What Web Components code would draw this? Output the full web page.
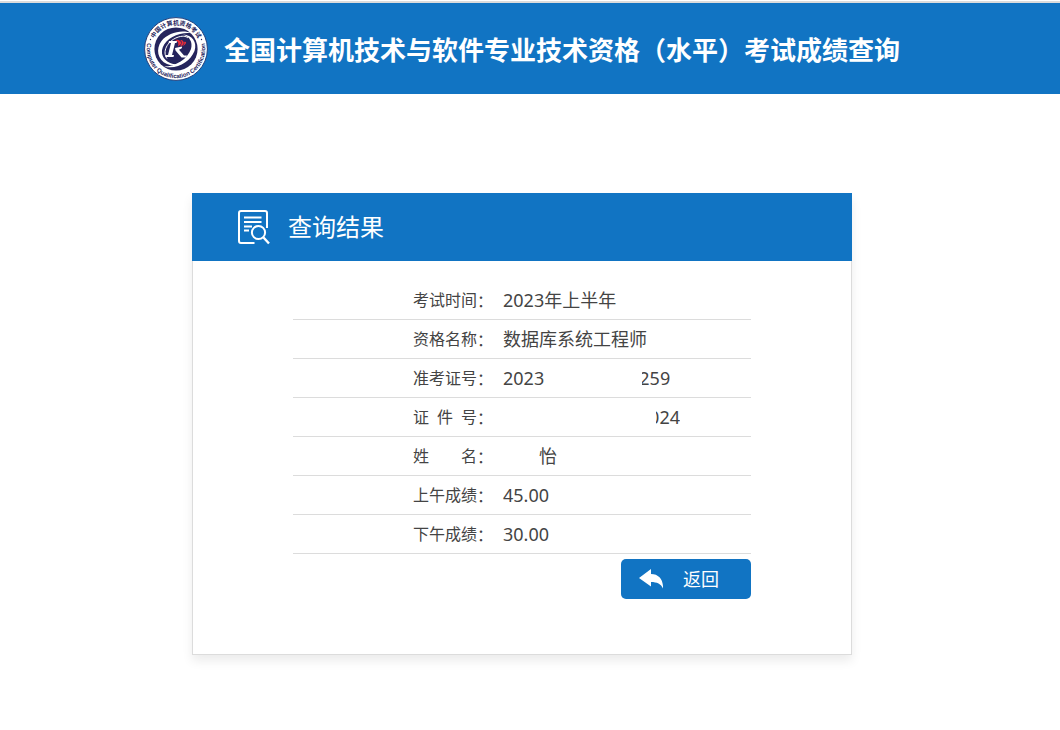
<!DOCTYPE html>
<html lang="zh-CN">
<head>
<meta charset="utf-8">
<title>全国计算机技术与软件专业技术资格（水平）考试成绩查询</title>
<style>
  :root { --brand: #1174c3; --line: #dcdcdc; --text: #444; }
  body {
    margin: 0;
    background: #fff;
    color: var(--text);
    font-family: "Noto Sans", "Noto Sans CJK SC", sans-serif;
  }
</style>
</head>
<body>
<site-header>全国计算机技术与软件专业技术资格（水平）考试成绩查询</site-header>
<result-card>
  <span slot="title">查询结果</span>
  <score-table></score-table>
  <back-button>返回</back-button>
</result-card>

<script>
function define(name, html, setup) {
  const template = document.createElement('template');
  template.innerHTML = html;
  customElements.define(name, class extends HTMLElement {
    constructor() {
      super();
      this.attachShadow({ mode: 'open' }).append(template.content.cloneNode(true));
      if (setup) setup(this.shadowRoot);
    }
  });
}

define('exam-logo', `
  <style>
    :host { display: block; flex: none; width: 64px; height: 64px; }
    svg { display: block; width: 100%; height: 100%; }
    text { fill: #25245c; font-weight: 700; }
  </style>
  <svg viewBox="0 0 64 64" role="img" aria-label="中国计算机资格考试">
    <defs>
      <path id="top" d="M7.800 32A24.200 24.200 0 0 1 56.200 32"/>
      <path id="bottom" d="M4.060 23.500A29.200 29.200 0 1 0 59.940 23.500"/>
    </defs>
    <circle cx="32" cy="32" r="31.400" fill="#fff" stroke="#25407c" stroke-width="1"/>
    <circle cx="32" cy="32" r="21.600" fill="#25245c"/>
    <text font-size="6" text-anchor="middle"><textPath href="#top" startOffset="50%">中国计算机资格考试</textPath></text>
    <text font-size="6" text-anchor="middle" font-family="Liberation Sans"><textPath href="#bottom" startOffset="50%">Computer Qualification Certification</textPath></text>
    <circle cx="6.500" cy="22.500" r=".7" fill="#25245c"/><circle cx="57.500" cy="22.500" r=".7" fill="#25245c"/>
    <path fill="#fff" d="M48 16.500C38 12 24 16 17.500 24C11.500 32 13.500 43 23 47C27 48.800 31 48.500 34 47.500C26 47.500 19 43 18 36.500C17 28 25 19.500 36 17C41 15.800 45 15.800 48 16.500Z"/>
    <path fill="#fff" d="M20 49.500C33 53 46 45 50.500 34C53.500 25 48 18 39 17.500C45.500 19.500 49 25 47 32C43.500 42 32 49.500 20 49.500Z"/>
    <path fill="none" stroke="#fff" stroke-width="1" d="M23 41.500C18 35 23 24.500 33 20.500C38 18.500 42 19 44 21"/>
    <path fill="#fff" d="M25 24H33L32.500 26H31L28 38H30L29.500 40H21.500L22 38H24L27 26H24.500Z"/>
    <path fill="#fff" d="M31 31L38 29.500C38.500 31 37 32 35 32.700L40 38.500H43L42 40.500H37.500L31.500 33.500Z"/>
    <path fill="#e52d3b" d="M31 23C34 22 38 24 37 27L34 29.500C35 26 34 24 31 23ZM36 23C39 23 41 25 39 28L36 29.500C38.500 26 38 24 36 23ZM40 25C42.500 24 43 26 40.500 28L37 30C39 29 41 27 40 25Z"/>
  </svg>`);

define('site-header', `
  <style>
    :host { display: block; margin-top: 1px; border-top: 2px solid var(--line); background: var(--brand); color: #fff; }
    header { display: flex; align-items: center; justify-content: center; gap: 16px; padding: 14px 16px 13px 0; }
    h1 { margin: 0; padding-top: 2px; font-size: 26px; line-height: 40px; font-weight: 700; white-space: nowrap; }
  </style>
  <header><exam-logo></exam-logo><h1><slot></slot></h1></header>`);

define('result-card', `
  <style>
    :host { display: block; padding: 99px 16px 75px 0; }
    section { box-sizing: border-box; max-width: 660px; margin: 0 auto; border: 1px solid var(--line); border-top: 0; box-shadow: 0 6px 10px rgba(0, 0, 0, .08); }
    header { display: flex; align-items: center; gap: 18px; height: 68px; box-sizing: border-box; margin: 0 -1px; padding-left: 46px; background: var(--brand); color: #fff; }
    svg { display: block; width: 32px; height: 36px; }
    h2 { margin: 0; font-size: 24px; line-height: 36px; font-weight: 400; }
    .body { display: flex; flex-direction: column; gap: 5px; padding: 20px 100px 55px; }
  </style>
  <section>
    <header>
      <svg viewBox="0 0 32 36" fill="none" stroke="#fff" stroke-width="2" aria-hidden="true">
        <path d="M16.500 34H3Q1 34 1 32V4Q1 2 3 2H27Q29 2 29 4V19"/>
        <path d="M6 8.500H23.500M6 13H23.500M6 17.500H14M6 21.500H11"/>
        <circle cx="20.500" cy="23.500" r="6.600"/>
        <path d="M25.500 28.500L31 34.500" stroke-width="2.400"/>
      </svg>
      <h2><slot name="title"></slot></h2>
    </header>
    <div class="body"><slot></slot></div>
  </section>`);

const records = [
  ['考试时间', '2023年上半年'],
  ['资格名称', '数据库系统工程师'],
  ['准考证号', '2023', 'ticket', '259'],
  ['证 件 号', '', 'identity', '024'],
  ['姓 名', '', 'person', '怡'],
  ['上午成绩', '45.00'],
  ['下午成绩', '30.00']
];

define('score-table', `
  <style>
    :host { display: block; }
    table { width: 100%; border-collapse: separate; border-spacing: 0; }
    th, td { height: 38px; padding: 0; border-bottom: 1px solid var(--line); text-align: left; font-weight: 400; white-space: nowrap; }
    th { width: 90px; padding-left: 120px; font-size: 16px; }
    td { font-size: 18px; }
    .label, .value { display: flex; align-items: center; line-height: 24px; }
    .name { width: 64px; text-align-last: justify; }
    .colon { width: 16px; text-align: center; font-family: "Noto Sans CJK SC", sans-serif; }
    /* Personal data is masked: only the tail of the value stays visible. */
    .tail { display: flex; justify-content: flex-end; overflow: hidden; }
    .ticket { width: 28px; margin-left: 98px; }
    .identity { width: 24px; margin-left: 153px; }
    .person { width: 18px; margin-left: 36px; }
  </style>
  <table><tbody></tbody></table>`, root => {
  const body = root.querySelector('tbody');
  for (const [name, value, kind, tail] of records) {
    const row = body.insertRow();
    row.innerHTML = `<th scope="row"><div class="label"><span class="name">${name}</span><span class="colon">：</span></div></th>
      <td><div class="value">${value ? `<span>${value}</span>` : ''}${tail ? `<span class="tail ${kind}"><span>${tail}</span></span>` : ''}</div></td>`;
  }
});

define('back-button', `
  <style>
    :host { display: block; align-self: flex-end; }
    button { display: flex; align-items: center; gap: 20px; width: 130px; height: 40px; padding: 0 0 0 18px; border: 0; border-radius: 5px; background: var(--brand); color: #fff; font: inherit; font-size: 18px; line-height: 24px; cursor: pointer; }
    svg { display: block; width: 24px; height: 20px; }
  </style>
  <button type="button">
    <svg viewBox="0 0 24 20" fill="#fff" aria-hidden="true"><path d="M0 9L12 0V5C20 5 24.500 11 24 19.500C22 15 18 13 12 13V17.500Z"/></svg>
    <span><slot></slot></span>
  </button>`);
</script>
</body>
</html>
